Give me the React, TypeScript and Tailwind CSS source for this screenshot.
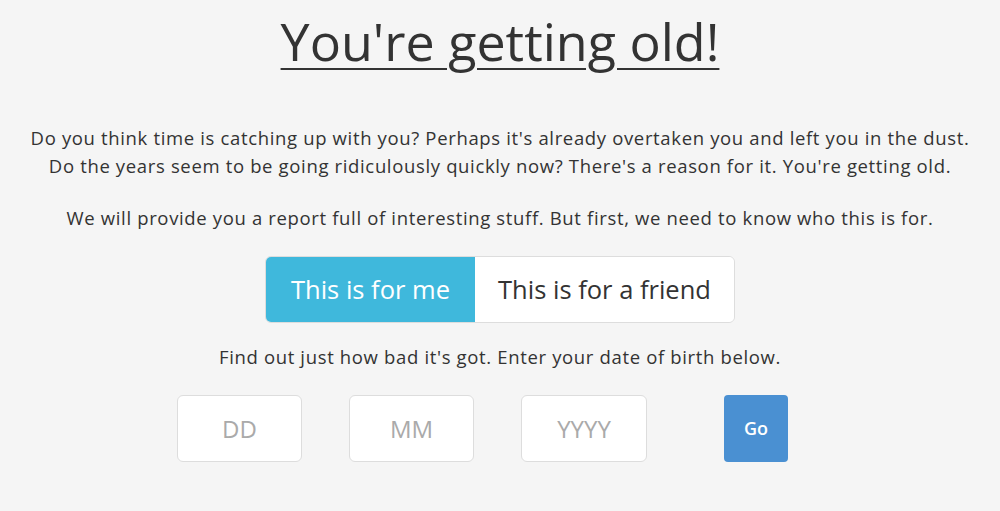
export default function App() {
  return (
    <div
      className="min-h-[511px] bg-[#f5f5f5] text-[#333] flex flex-col items-center"
      style={{ fontFamily: '"Open Sans", "Noto Sans", sans-serif' }}
    >
      <h1 className="mt-[8px] text-[52px] leading-[66px] underline decoration-2 underline-offset-[7px]">
        You're getting old!
      </h1>

      <p className="mt-[50px] text-[18.5px] tracking-[0.65px] leading-[28px] text-center">
        Do you think time is catching up with you? Perhaps it's already overtaken you and left you in the dust.
        <br />
        Do the years seem to be going ridiculously quickly now? There's a reason for it. You're getting old.
      </p>

      <p className="mt-[24px] text-[18.5px] tracking-[0.65px] leading-[28px] text-center">
        We will provide you a report full of interesting stuff. But first, we need to know who this is for.
      </p>

      <div className="mt-[24px] flex h-[67px] w-[470px] rounded-[6px] border border-[#ddd] overflow-hidden text-[25.5px]">
        <button className="w-[209px] bg-[#3fb8dc] text-white">This is for me</button>
        <button className="flex-1 bg-white text-[#333]">This is for a friend</button>
      </div>

      <p className="mt-[20px] text-[18.5px] tracking-[0.65px] leading-[28px] text-center">
        Find out just how bad it's got. Enter your date of birth below.
      </p>

      <div className="mt-[24px] w-[646px] flex items-center">
        <input
          placeholder="DD"
          className="w-[125px] h-[67px] rounded-[6px] border border-[#ddd] bg-white text-center text-[24px] placeholder:text-[#aaa]"
        />
        <input
          placeholder="MM"
          className="ml-[47px] w-[125px] h-[67px] rounded-[6px] border border-[#ddd] bg-white text-center text-[24px] placeholder:text-[#aaa]"
        />
        <input
          placeholder="YYYY"
          className="ml-[47px] w-[126px] h-[67px] rounded-[6px] border border-[#ddd] bg-white text-center text-[24px] placeholder:text-[#aaa]"
        />
        <button className="ml-[77px] w-[64px] h-[67px] rounded-[4px] bg-[#4a90d2] text-white text-[18px] font-semibold">
          Go
        </button>
      </div>
    </div>
  )
}
